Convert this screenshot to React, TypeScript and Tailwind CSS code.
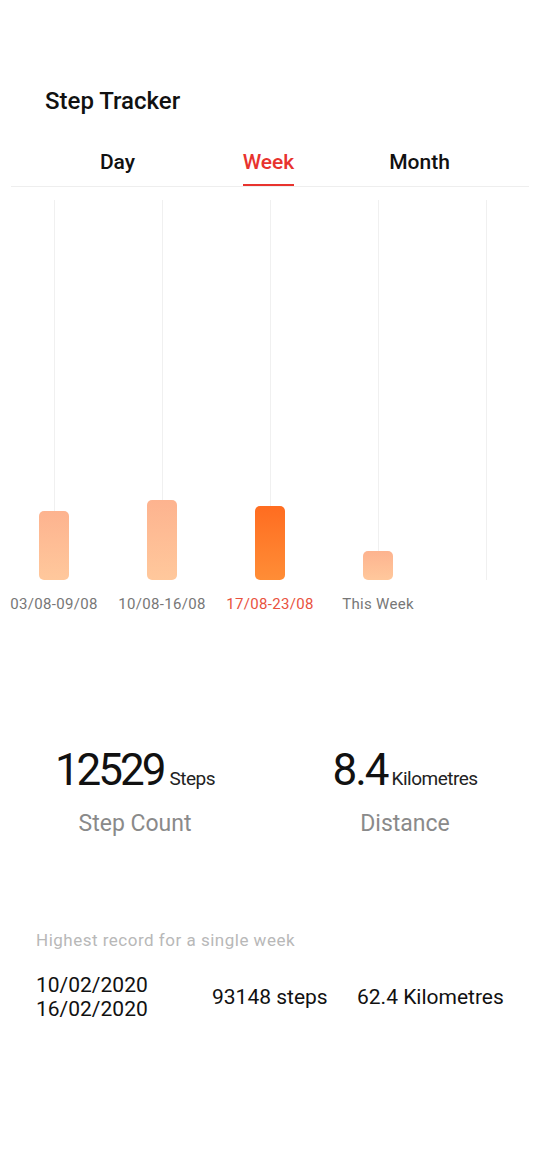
const weeks = [
  { label: '03/08-09/08', height: 69, active: false },
  { label: '10/08-16/08', height: 80, active: false },
  { label: '17/08-23/08', height: 74, active: true },
  { label: 'This Week', height: 29, active: false },
  { label: '', height: 0, active: false },
]

const tabs = ['Day', 'Week', 'Month']

export default function App() {
  return (
    <div className="w-[540px] h-[1170px] bg-white text-black font-['Roboto','Noto_Sans',sans-serif] overflow-hidden">
      <div className="pt-[86px] pl-[45px] text-[24px] leading-[30px] font-medium text-[#111]">Step Tracker</div>

      {/* tabs */}
      <div className="mt-[32px] mx-[11px] border-b border-[#eeeeee]">
        <div className="ml-[31px] w-[453px] grid grid-cols-3">
          {tabs.map((t) => (
            <div key={t} className="flex flex-col items-center">
              <span className={`text-[21px] leading-[28px] font-medium ${t === 'Week' ? 'text-[#e8332e]' : 'text-[#111]'}`}>{t}</span>
              <div className={`mt-[8px] h-[2px] w-[51px] ${t === 'Week' ? 'bg-[#e8332e]' : 'bg-transparent'}`} />
            </div>
          ))}
        </div>
      </div>

      {/* chart */}
      <div className="mt-[13px] flex">
        {weeks.map((w, i) => (
          <div key={i} className="w-[108px] flex flex-col items-center">
            <div className="h-[380px] flex flex-col items-center">
              <div className="flex-1 w-px bg-[#f0f0f0]" />
              {w.height > 0 && (
                <div
                  className={`w-[30px] rounded-[5px] bg-gradient-to-b ${
                    w.active ? 'from-[#ff6c20] to-[#ff8d36]' : 'from-[#fdb38f] to-[#ffc89c]'
                  }`}
                  style={{ height: w.height }}
                />
              )}
            </div>
            <div className={`mt-[14px] h-[20px] text-[15px] leading-[20px] tracking-[0.3px] whitespace-nowrap ${w.active ? 'text-[#e9523e]' : 'text-[#777777]'}`}>
              {w.label}
            </div>
          </div>
        ))}
      </div>

      {/* stats */}
      <div className="mt-[130px] grid grid-cols-2">
        <div className="flex flex-col items-center">
          <div className="flex items-baseline">
            <span className="text-[44px] leading-[52px] tracking-[-3px] text-[#111]">12529</span>
            <span className="ml-[6px] text-[19px] tracking-[-0.5px] text-[#222]">Steps</span>
          </div>
          <div className="mt-[13px] text-[23px] leading-[30px] text-[#8a8a8a]">Step Count</div>
        </div>
        <div className="flex flex-col items-center">
          <div className="flex items-baseline">
            <span className="text-[44px] leading-[52px] tracking-[-2px] text-[#111]">8.4</span>
            <span className="ml-[4px] text-[19px] tracking-[-0.5px] text-[#222]">Kilometres</span>
          </div>
          <div className="mt-[13px] text-[23px] leading-[30px] text-[#8a8a8a]">Distance</div>
        </div>
      </div>

      {/* record */}
      <div className="mt-[90px] pl-[36px] text-[17px] leading-[22px] tracking-[0.5px] text-[#b8b8b8]">Highest record for a single week</div>
      <div className="mt-[22px] pl-[36px] flex items-center text-[21px] leading-[24px] text-[#111]">
        <div className="w-[176px]">
          <div>10/02/2020</div>
          <div>16/02/2020</div>
        </div>
        <div className="w-[145px]">93148 steps</div>
        <div>62.4 Kilometres</div>
      </div>
    </div>
  )
}
